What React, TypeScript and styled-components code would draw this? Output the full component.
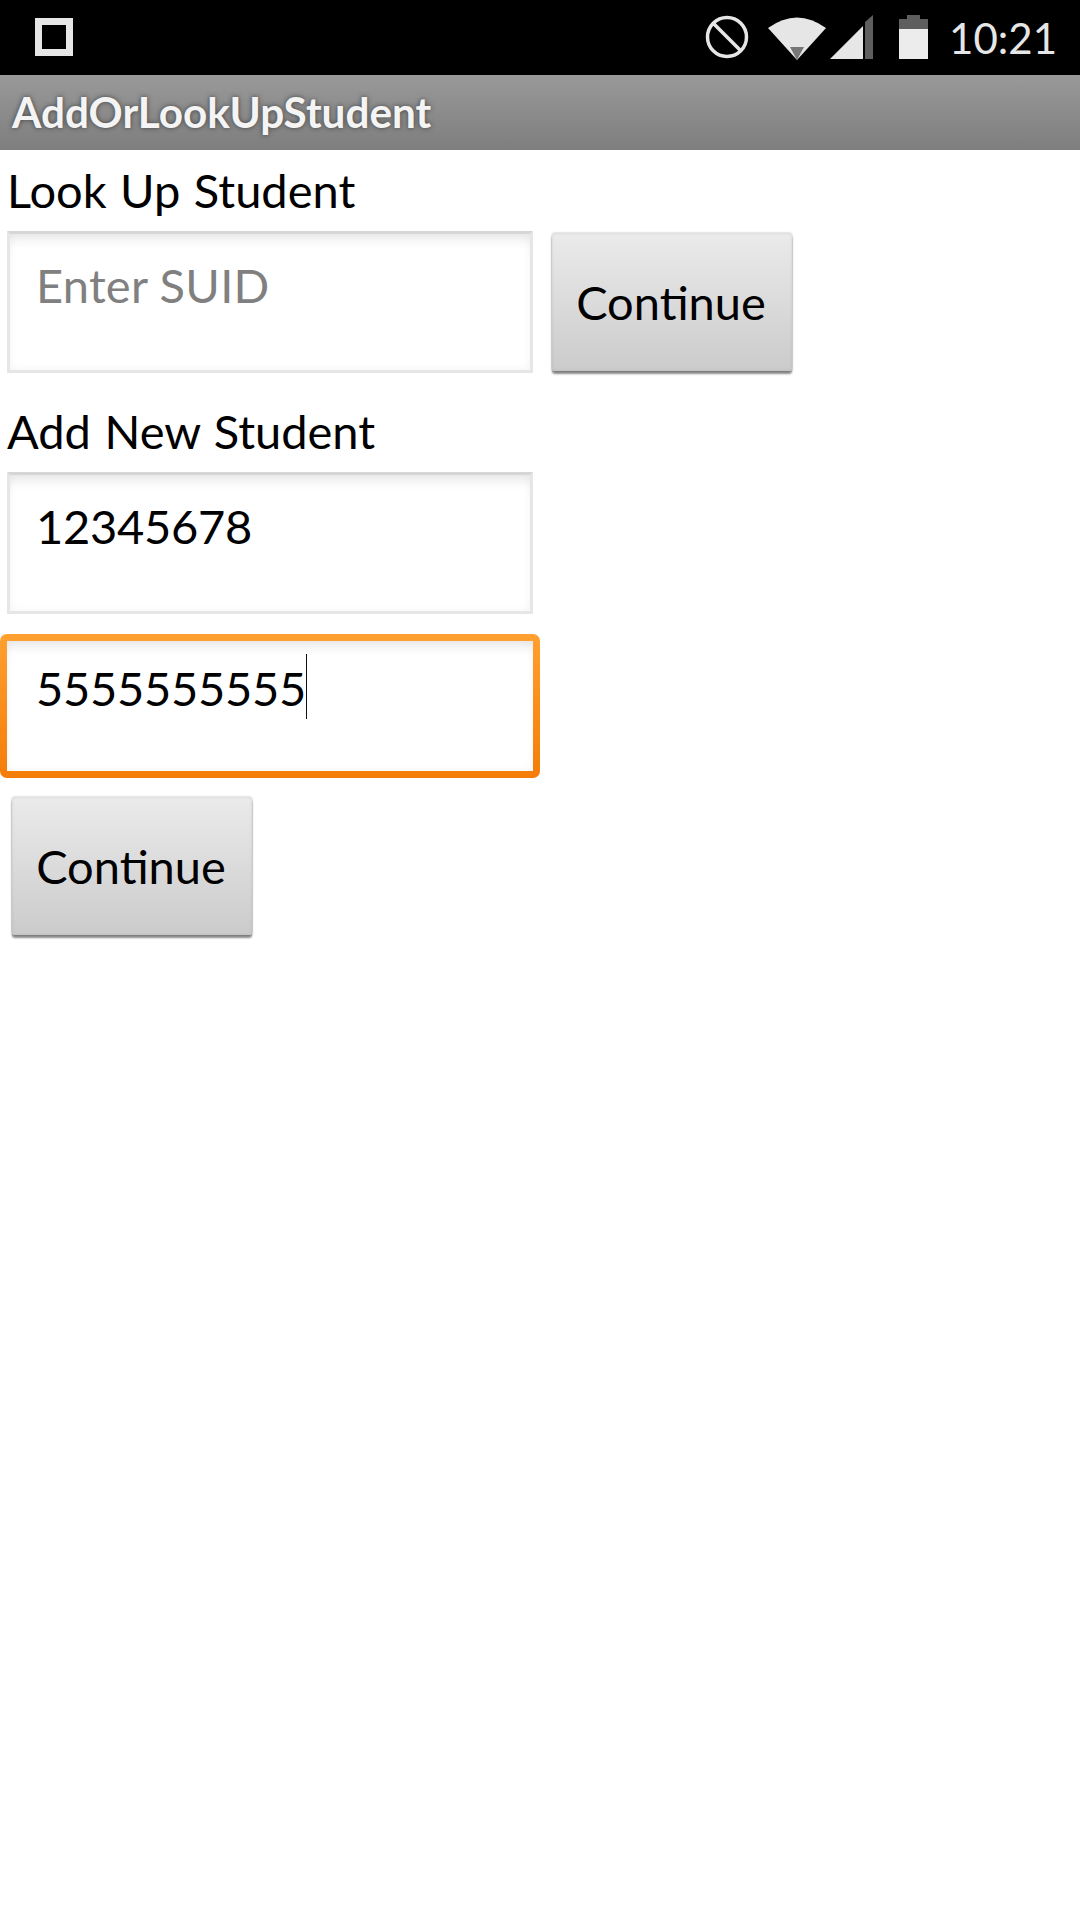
import React from "react";
import styled, { createGlobalStyle } from "styled-components";

const Global = createGlobalStyle`
  html, body { margin: 0; padding: 0; background: #fff; }
  #root { width: 1080px; height: 1920px; overflow: hidden; }
`;

const Page = styled.div`
  width: 1080px;
  height: 1920px;
  background: #fff;
  font-family: Lato, "Liberation Sans", sans-serif;
  color: #000;
`;

const StatusBar = styled.div`
  height: 75px;
  background: #000;
  display: flex;
  align-items: flex-start;
  justify-content: space-between;
  padding: 15px 23px 0 35px;
  box-sizing: border-box;
`;

const AppIcon = styled.div`
  width: 38px;
  height: 38px;
  margin-top: 3px;
  box-sizing: border-box;
  border: 7px solid #e6e6e6;
`;

const StatusGroup = styled.div`
  display: flex;
  align-items: flex-start;
`;

const Clock = styled.span`
  font-size: 42px;
  line-height: 48px;
  color: #e6e6e6;
  margin-left: 21px;
  margin-top: -1px;
`;

const TitleBar = styled.div`
  height: 75px;
  box-sizing: border-box;
  background: linear-gradient(#999999, #7e7e7e);
  padding: 0 12px 2px;
  display: flex;
  align-items: center;
  font-size: 42.3px;
  font-weight: 700;
  color: #f4f4f4;
  text-shadow: 0 0 5px rgba(50, 50, 50, 0.85);
`;

const Content = styled.div`
  display: flex;
  flex-direction: column;
  align-items: flex-start;
  padding-top: 12px;
`;

const Label = styled.div<{ $top?: number }>`
  font-size: 47px;
  line-height: 56px;
  margin-left: 7px;
  word-spacing: 1.5px;
  margin-top: ${(p) => p.$top ?? 0}px;
`;

const Row = styled.div`
  display: flex;
  align-items: flex-start;
  margin-top: 13px;
`;

const Field = styled.div<{ $focused?: boolean; $top?: number }>`
  box-sizing: border-box;
  margin-top: ${(p) => p.$top ?? 0}px;
  margin-left: ${(p) => (p.$focused ? 0 : 7)}px;
  width: ${(p) => (p.$focused ? 540 : 526)}px;
  height: ${(p) => (p.$focused ? 144 : 142)}px;
  padding: ${(p) => (p.$focused ? "19px 0 0 29px" : "23px 0 0 26px")};
  font-size: 47px;
  line-height: 56px;
  background: #fff;
  border: ${(p) => (p.$focused ? "7px solid transparent" : "3px solid #e6e6e6")};
  border-top-color: ${(p) => (p.$focused ? "transparent" : "#d6d6d6")};
  border-radius: ${(p) => (p.$focused ? 7 : 1)}px;
  box-shadow: inset 0 14px 12px -8px rgba(0, 0, 0, 0.08),
    inset 0 0 8px rgba(0, 0, 0, 0.05);
  ${(p) =>
    p.$focused
      ? `background: linear-gradient(#fff, #fff) padding-box,
           linear-gradient(#ffa030, #f57c08) border-box;`
      : ""}
`;

const Placeholder = styled.span`
  color: #808080;
  letter-spacing: 0.25px;
`;

const Digits = styled.span`
  letter-spacing: -0.25px;
`;

const Caret = styled.span`
  display: inline-block;
  width: 1px;
  height: 65px;
  background: #111;
  vertical-align: top;
  margin-top: -6px;
`;

const Button = styled.button<{ $left: number; $top: number }>`
  box-sizing: border-box;
  width: 240px;
  height: 138px;
  margin-left: ${(p) => p.$left}px;
  margin-top: ${(p) => p.$top}px;
  padding: 0 2px 0 0;
  border: none;
  border-radius: 3px;
  background: linear-gradient(#ebebeb, #cbcbcb);
  box-shadow: 0 3px 2px rgba(0, 0, 0, 0.45), 0 0 2px rgba(0, 0, 0, 0.35),
    inset 0 0 3px rgba(0, 0, 0, 0.1);
  font-family: inherit;
  font-size: 47px;
  color: #000;
`;

const Svg = styled.svg`
  display: block;
  flex: none;
`;

const BlockIcon = () => (
  <Svg width="44" height="44" viewBox="0 0 44 44">
    <circle cx="22" cy="22" r="19.5" fill="none" stroke="#e6e6e6" strokeWidth="3.5" />
    <path d="M8.5 8.5 L35.5 35.5" stroke="#e6e6e6" strokeWidth="3.5" />
  </Svg>
);

const WifiIcon = () => (
  <Svg width="58" height="45" viewBox="0 0 58 45" style={{ marginLeft: 19 }}>
    <path d="M0 13 Q29 -8 58 13 L29 45 Z" fill="#e6e6e6" />
    <path d="M22 32 L36 32 L29 45 Z" fill="#777" />
  </Svg>
);

const SignalIcon = () => (
  <Svg width="43" height="45" viewBox="0 0 43 45" style={{ marginLeft: 4 }}>
    <path d="M0 44 L33 11 L33 44 Z" fill="#e6e6e6" />
    <path d="M35 7 L43 0 L43 44 L35 44 Z" fill="#5e5e5e" />
  </Svg>
);

const BatteryIcon = () => (
  <Svg width="29" height="45" viewBox="0 0 29 45" style={{ marginLeft: 26 }}>
    <path d="M8 0 H21 V4 H29 V14 H0 V4 H8 Z" fill="#5e5e5e" />
    <path d="M0 14 H29 V44 H0 Z" fill="#ececec" />
  </Svg>
);

export default function App() {
  return (
    <Page>
      <Global />
      <StatusBar>
        <AppIcon />
        <StatusGroup>
          <BlockIcon />
          <WifiIcon />
          <SignalIcon />
          <BatteryIcon />
          <Clock>10:21</Clock>
        </StatusGroup>
      </StatusBar>
      <TitleBar>AddOrLookUpStudent</TitleBar>
      <Content>
        <Label>Look Up Student</Label>
        <Row>
          <Field>
            <Placeholder>Enter SUID</Placeholder>
          </Field>
          <Button $left={19} $top={2}>Continue</Button>
        </Row>
        <Label $top={30}>Add New Student</Label>
        <Field $top={13}>
          <Digits>12345678</Digits>
        </Field>
        <Field $focused $top={20}>
          <Digits>5555555555</Digits>
          <Caret />
        </Field>
        <Button $left={12} $top={19}>Continue</Button>
      </Content>
    </Page>
  );
}
